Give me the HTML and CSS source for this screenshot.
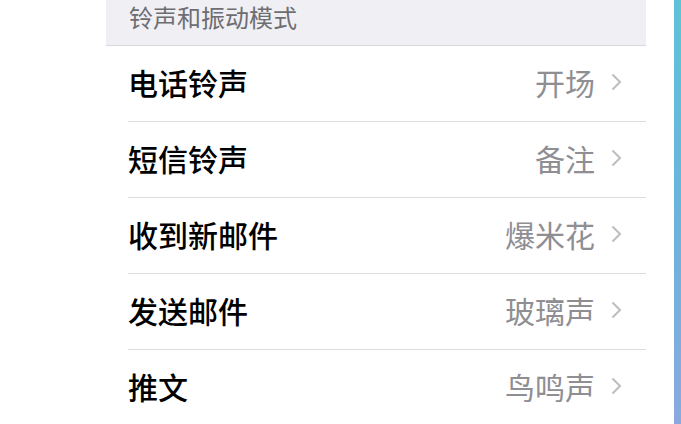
FILE: index.html
```html
<!DOCTYPE html>
<html lang="zh-CN">

<head>
    <meta charset="UTF-8">
    <title>声音</title>
    <link rel="stylesheet" href="styles.css">
</head>

<body>
    <div id="screen">
        <div id="settings">
            <div class="section-header">铃声和振动模式</div>
            <ul class="list">
                <li class="row">
                    <span class="label">电话铃声</span>
                    <span class="value">开场</span>
                    <svg class="chevron" viewBox="0 0 11 18"><path d="M1.5 1.5 L9 9 L1.5 16.5" /></svg>
                </li>
                <li class="row">
                    <span class="label">短信铃声</span>
                    <span class="value">备注</span>
                    <svg class="chevron" viewBox="0 0 11 18"><path d="M1.5 1.5 L9 9 L1.5 16.5" /></svg>
                </li>
                <li class="row">
                    <span class="label">收到新邮件</span>
                    <span class="value">爆米花</span>
                    <svg class="chevron" viewBox="0 0 11 18"><path d="M1.5 1.5 L9 9 L1.5 16.5" /></svg>
                </li>
                <li class="row">
                    <span class="label">发送邮件</span>
                    <span class="value">玻璃声</span>
                    <svg class="chevron" viewBox="0 0 11 18"><path d="M1.5 1.5 L9 9 L1.5 16.5" /></svg>
                </li>
                <li class="row">
                    <span class="label">推文</span>
                    <span class="value">鸟鸣声</span>
                    <svg class="chevron" viewBox="0 0 11 18"><path d="M1.5 1.5 L9 9 L1.5 16.5" /></svg>
                </li>
            </ul>
        </div>
        <div id="edge"></div>
    </div>
</body>

</html>
```

FILE: styles.css
```css
body {
    margin: 0;
    background: #ffffff;
    font-family: "Noto Sans CJK SC", "Noto Sans", sans-serif;
}

#screen {
    display: flex;
    height: 424px;
    overflow: hidden;
}

#settings {
    width: 540px;
    margin-left: 106px;
}

/* blue strip at the right edge */
#edge {
    width: 7px;
    margin-left: auto;
    background: linear-gradient(to bottom, #5fc2d8, #6ab4dc 50%, #8aa9de);
}

.section-header {
    height: 45px;
    padding-left: 23px;
    background: #efeff4;
    border-bottom: 1px solid #d8d8dc;
    color: #6d6d72;
    font-size: 24px;
    line-height: 34px;
}

.list {
    list-style: none;
    margin: 0;
    padding: 0 0 0 22px;
}

.row {
    display: flex;
    align-items: center;
    height: 71px;
    padding: 0 24px 4px 0;
    border-bottom: 1px solid #dcdcdf;
}

.row:last-child {
    border-bottom: none;
}

.label {
    flex: 1;
    color: #000000;
    font-size: 30px;
    font-weight: 500;
}

.value {
    color: #8e8e93;
    font-size: 30px;
}

.chevron {
    width: 11px;
    height: 18px;
    margin-left: 16px;
    fill: none;
    stroke: #bdbdc2;
    stroke-width: 2;
}
```
